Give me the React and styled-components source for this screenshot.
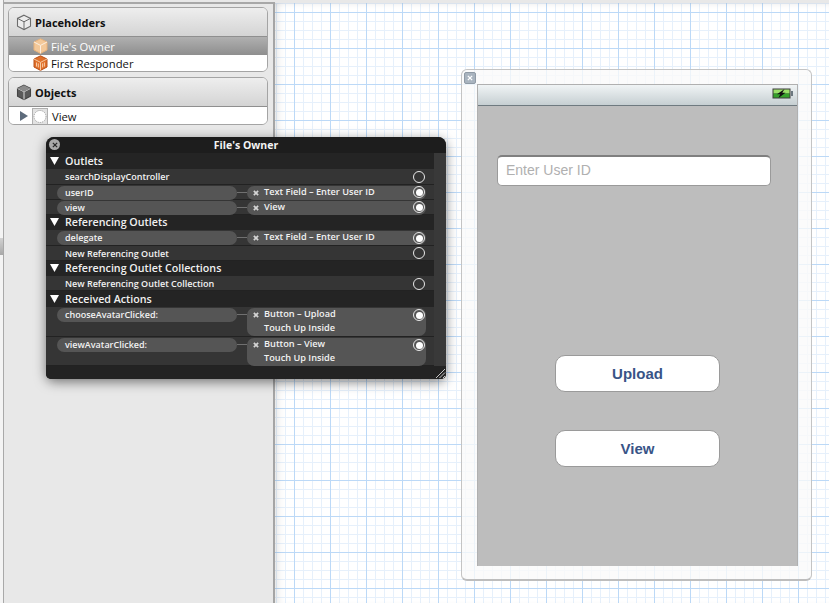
import React from "react";
import styled, { createGlobalStyle } from "styled-components";

const Global = createGlobalStyle`
  html, body { margin: 0; padding: 0; height: 100%; overflow: hidden; background: #e8e8e8; }
  #root { height: 100%; }
  * { box-sizing: border-box; }
`;

const Page = styled.div`
  width: 829px; height: 603px; display: flex; overflow: hidden; position: relative;
  font-family: "Open Sans", "DejaVu Sans", sans-serif;
`;
const Sliver = styled.div`
  width: 4px; flex: none; border-right: 1px solid #a9a9a9; padding-top: 238px;
  background: #f4f4f4;
`;
const SliverTab = styled.div`
  height: 17px; background: linear-gradient(#d2d2d2, #a8a8a8);
`;
const Sidebar = styled.aside`
  width: 271px; flex: none; background: #e8e8e8; border-right: 2px solid #a5a5a5;
  padding: 3px 5px 0 4px; display: flex; flex-direction: column; gap: 5px;
  border-top: 2px solid #a8a8a8; margin-top: 2px;
`;
const Group = styled.section`
  height: ${p => p.$h}px; border: 1px solid #a4a4a4; border-radius: 6px; overflow: hidden;
  background: #fff; display: flex; flex-direction: column;
`;
const GroupHead = styled.header`
  height: 29px; flex: none; display: flex; align-items: center; gap: 3px; padding-left: 7px;
  background: linear-gradient(#eeeeee, #d4d4d4); border-bottom: 1px solid #8f8f8f;
  font-size: 11px; font-weight: 700; color: #111;
`;
const Item = styled.div`
  height: ${p => p.$h}px; flex: none; display: flex; align-items: center; gap: ${p => p.$gap}px;
  padding-left: ${p => p.$pad}px; font-size: 11.25px;
  color: ${p => (p.$sel ? "#fff" : "#111")};
  background: ${p => (p.$sel ? "linear-gradient(#b0b0b0, #8e8e8e)" : "#fff")};
`;
const Canvas = styled.main`
  flex: 1; margin-top: 3px; position: relative;
  background-color: #fff;
  background-image:
    linear-gradient(to right, #bcd9f7 1px, transparent 1px),
    linear-gradient(to bottom, #bcd9f7 1px, transparent 1px),
    linear-gradient(to right, #e6f0fb 1px, transparent 1px),
    linear-gradient(to bottom, #e6f0fb 1px, transparent 1px);
  background-size: 36px 36px, 36px 36px, 9px 9px, 9px 9px;
  background-position: 19px 0, 0 9px, 1px 0, 0 0;
  box-shadow: inset 8px 0 8px -6px rgba(0,0,0,.13), inset 0 6px 6px -5px rgba(0,0,0,.08);
`;
const DeviceFrame = styled.div`
  position: absolute; left: 186px; top: 66px; width: 351px; height: 512px;
  border: 1px solid #c4c4c4; border-bottom: 2px solid #bdbdbd; border-radius: 6px;
  background: rgba(250,250,250,.78); padding: 14px 0 0 15px;
`;
const CloseSquare = styled.div`
  position: absolute; left: 2px; top: 2px; width: 12px; height: 12px; border-radius: 2px;
  background: #a9b4bf; border: 1px solid #8f9aa5; display: flex; align-items: center; justify-content: center;
`;
const Screen = styled.div`
  width: 321px; height: 482px; display: flex; flex-direction: column; background: #bdbdbd;
  border: 1px solid #b0b0b0; border-bottom: none;
`;
const StatusBar = styled.div`
  height: 21px; flex: none; display: flex; justify-content: flex-end; align-items: center; padding: 0 4px 3px 0;
  background: linear-gradient(#f0f4f5, #c6cfd2); border-bottom: 1px solid #6f7a80;
`;
const ScreenBody = styled.div`
  flex: 1; padding: 49px 0 0 19px; display: flex; flex-direction: column;
`;
const Field = styled.input`
  width: 274px; height: 31px; flex: none; border-radius: 5px; background: #fff; outline: none;
  border: 1px solid #9a9a9a; border-top: 2px solid #7f7f7f; padding: 0 8px 2px;
  font: 14px "Liberation Sans", sans-serif;
  &::placeholder { color: #b0b0b0; opacity: 1; }
`;
const ActionButton = styled.button`
  width: 165px; height: 37px; flex: none; margin: ${p => p.$top}px 0 0 58px; padding: 0;
  border: 1px solid #9a9a9a; border-radius: 10px; background: #fff;
  font: 700 15px "Liberation Sans", sans-serif; color: #385487;
`;
const Inspector = styled.div`
  position: absolute; left: 46px; top: 137px; width: 400px; height: 242px;
  border-radius: 8px 8px 5px 5px; overflow: hidden; display: flex; flex-direction: column;
  background: #202020; color: #f2f2f2;
`;
const InspectorShadow = styled.div`
  position: absolute; left: 46px; top: 137px; width: 400px; height: 242px; border-radius: 8px;
  box-shadow: 0 3px 12px rgba(0,0,0,.5);
`;
const TitleBar = styled.div`
  height: 16px; flex: none; position: relative; display: flex; align-items: center; justify-content: center;
  background: #1d1d1d; font-size: 10.5px; font-weight: 700; color: #f4f4f4;
`;
const CloseDot = styled.div`
  position: absolute; left: 3px; top: 2px; width: 11px; height: 11px; border-radius: 50%;
  background: #a9a9a9; display: flex; align-items: center; justify-content: center;
`;
const Body = styled.div`
  flex: 1; display: flex; min-height: 0;
`;
const Rows = styled.div`
  width: 388px; flex: none; display: flex; flex-direction: column;
`;
const Track = styled.div`
  flex: 1; background: #393939;
`;
const SectionRow = styled.div`
  height: ${p => p.$h}px; flex: none; display: flex; align-items: center; gap: 6px; padding: 0 0 ${p => (p.$h === 15 ? 1 : 0)}px 4px;
  background: #242424; font-size: 10.7px; font-weight: 600; color: #f0f0f0;
`;
const Outlet = styled.div`
  height: ${p => p.$h}px; flex: none; position: relative; display: flex; align-items: flex-start;
  background: #353535; border-bottom: 1px solid #222;
  font-size: 9px; font-weight: 600; color: #f2f2f2;
`;
const Name = styled.div`
  margin-left: ${p => p.$pill ? 11 : 19}px; margin-top: 1px; height: 14px; width: ${p => p.$pill ? 180 : "auto"}px; line-height: 13px;
  padding-left: ${p => p.$pill ? 8 : 0}px; border-radius: 7px; background: ${p => p.$pill ? "#555" : "transparent"};
  white-space: nowrap;
`;
const Link = styled.div`
  width: 10px; height: 1px; margin-top: 7px; background: #707070; flex: none;
`;
const Target = styled.div`
  width: 179px; flex: none; margin-top: 1px; border-radius: 7px; background: #555; font-size: 9.2px;
  min-height: ${p => p.$tall ? 28 : 14}px; padding-left: 6px; display: flex; gap: 5px; align-items: flex-start; line-height: 14px;
`;
const TargetText = styled.div`
  display: flex; flex-direction: column; white-space: nowrap; margin-top: -1px;
`;
const Remove = styled.span`
  width: 6px; display: flex; margin-top: 4px;
`;
const Socket = styled.div`
  position: absolute; left: 367px; top: ${p => p.$top}px; width: 12px; height: 12px; border-radius: 50%;
  border: 1.5px solid #e8e8e8; background: ${p => p.$on ? "#555" : "transparent"};
  display: flex; align-items: center; justify-content: center;
  &::after { content: ""; display: ${p => p.$on ? "block" : "none"}; width: 7px; height: 7px; border-radius: 50%; background: #fff; }
`;
const Footer = styled.div`
  height: 13px; flex: none; background: #232323; display: flex; justify-content: flex-end; align-items: flex-end;
`;

const Cube = ({ fill }) => (
  <svg width="16" height="17" viewBox="0 0 16 17">
    <path d="M8 1.2 14.5 4.4v7.8L8 15.6 1.5 12.2V4.4Z" fill={fill ? "#5a5a5a" : "#ececec"} stroke={fill ? "#444" : "#6c6c6c"} strokeWidth="1.1" />
    <path d="M1.5 4.4 8 7.8l6.5-3.4M8 7.8v7.8" fill="none" stroke={fill ? "#ddd" : "#6c6c6c"} strokeWidth="1" />
    {fill && <path d="M8 1.2 14.5 4.4 8 7.8 1.5 4.4Z" fill="#8a8a8a" />}
  </svg>
);
const OrangeCube = ({ faded }) => (
  <svg width="15" height="16" viewBox="0 0 15 16">
    <path d="M7.5.8 14 4v8l-6.5 3.4L1 12V4Z" fill={faded ? "#f3c899" : "#e0702a"} stroke={faded ? "#e8b27a" : "#b8501a"} />
    <path d="M1 4l6.5 3.4L14 4M7.5 7.4v8" fill="none" stroke={faded ? "#fbeee0" : "#f7c9a0"} strokeWidth="1" />
    {!faded && <path d="M3.5 7.5v4M5.3 8.4v4M9.6 8.4v4M11.4 7.5v4" stroke="#ffe3c8" strokeWidth=".8" />}
  </svg>
);
const ViewIcon = () => (
  <svg width="16" height="17" viewBox="0 0 16 17">
    <rect x=".5" y=".5" width="15" height="16" fill="#e2e2e2" stroke="#b0b0b0" />
    <circle cx="8" cy="8.5" r="6" fill="#fff" stroke="#999" strokeDasharray="1 1" />
  </svg>
);
const Disclosure = () => (
  <svg width="8" height="10" viewBox="0 0 8 10"><path d="M0 0 8 5 0 10Z" fill="#5d6b7b" /></svg>
);
const Down = () => (
  <svg width="9" height="8" viewBox="0 0 9 8"><path d="M0 0h9L4.5 8Z" fill="#fff" /></svg>
);
const Cross = ({ c = "#333", s = 7, w = 1.5 }) => (
  <svg width={s} height={s} viewBox="0 0 7 7"><path d="M1 1l5 5M6 1 1 6" stroke={c} strokeWidth={w} /></svg>
);
const Battery = () => (
  <svg width="21" height="11" viewBox="0 0 21 11">
    <rect x=".5" y=".5" width="18" height="10" fill="#3d3d3d" />
    <rect x="1.5" y="1.5" width="16" height="4" fill="#9be06a" />
    <rect x="1.5" y="5.5" width="16" height="4" fill="#35a02a" />
    <rect x="19" y="3" width="2" height="5" fill="#6c7880" />
    <path d="M12.5 1 5 6.2h3.2L6.5 10l7-5.2h-3.2Z" fill="#111" />
  </svg>
);
const Grip = () => (
  <svg width="12" height="12" viewBox="0 0 12 12"><path d="M11 2 2 11M11 5.5 5.5 11M11 9l-2 2" stroke="#c4c4c4" strokeWidth="1" /></svg>
);

const rows = [
  { kind: "s", h: 16, label: "Outlets" },
  { kind: "o", h: 16, label: "searchDisplayController", sock: 1 },
  { kind: "o", h: 15, label: "userID", target: ["Text Field – Enter User ID"], sock: 0, on: true },
  { kind: "o", h: 15, label: "view", target: ["View"], sock: 0, on: true },
  { kind: "s", h: 15, label: "Referencing Outlets" },
  { kind: "o", h: 16, label: "delegate", target: ["Text Field – Enter User ID"], sock: 1, on: true },
  { kind: "o", h: 15, label: "New Referencing Outlet", sock: 0 },
  { kind: "s", h: 15, label: "Referencing Outlet Collections" },
  { kind: "o", h: 15, label: "New Referencing Outlet Collection", sock: 1 },
  { kind: "s", h: 16, label: "Received Actions" },
  { kind: "o", h: 30, label: "chooseAvatarClicked:", target: ["Button – Upload", "Touch Up Inside"], sock: 1, on: true },
  { kind: "o", h: 29, label: "viewAvatarClicked:", target: ["Button – View", "Touch Up Inside"], sock: 1, on: true },
];

export default function App() {
  return (
    <Page>
      <Global />
      <Sliver><SliverTab /></Sliver>
      <Sidebar>
        <Group $h={65}>
          <GroupHead><Cube />Placeholders</GroupHead>
          <Item $h={18} $pad={24} $gap={3} $sel><OrangeCube faded />File's Owner</Item>
          <Item $h={16} $pad={24} $gap={3}><OrangeCube />First Responder</Item>
        </Group>
        <Group $h={48}>
          <GroupHead><Cube fill />Objects</GroupHead>
          <Item $h={18} $pad={11} $gap={4}><Disclosure /><ViewIcon />View</Item>
        </Group>
      </Sidebar>
      <Canvas>
        <DeviceFrame>
          <CloseSquare><Cross c="#fff" s={6} /></CloseSquare>
          <Screen>
            <StatusBar><Battery /></StatusBar>
            <ScreenBody>
              <Field placeholder="Enter User ID" readOnly />
              <ActionButton $top={169}>Upload</ActionButton>
              <ActionButton $top={38}>View</ActionButton>
            </ScreenBody>
          </Screen>
        </DeviceFrame>
      </Canvas>
      <InspectorShadow />
      <Inspector>
        <TitleBar>
          <CloseDot><Cross c="#2a2a2a" s={6} /></CloseDot>
          File's Owner
        </TitleBar>
        <Body>
          <Rows>
            {rows.map((r) =>
              r.kind === "s" ? (
                <SectionRow key={r.label} $h={r.h}><Down />{r.label}</SectionRow>
              ) : (
                <Outlet key={r.label} $h={r.h}>
                  <Name $pill={!!r.target}>{r.label}</Name>
                  {r.target && <Link />}
                  {r.target && (
                    <Target $tall={r.target.length > 1}>
                      <Remove><Cross c="#d4d4d4" s={6} w={2} /></Remove>
                      <TargetText>{r.target.map((t) => <span key={t}>{t}</span>)}</TargetText>
                    </Target>
                  )}
                  <Socket $top={r.sock + 1} $on={r.on} />
                </Outlet>
              )
            )}
          </Rows>
          <Track />
        </Body>
        <Footer><Grip /></Footer>
      </Inspector>
    </Page>
  );
}
